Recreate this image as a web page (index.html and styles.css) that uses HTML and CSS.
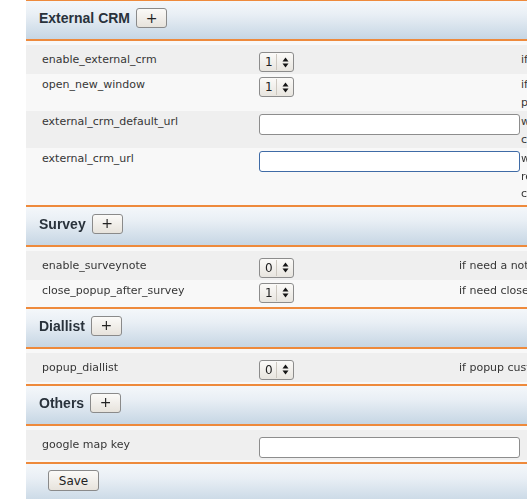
FILE: index.html
```html
<!DOCTYPE html>
<html lang="en">
<head>
<meta charset="utf-8">
<title>Settings</title>
<link rel="stylesheet" href="styles.css">
</head>
<body>
<div class="page">

  <section class="section">
    <div class="section-head">
      <h2 class="section-title">External CRM</h2>
      <button type="button" class="add-btn">+</button>
    </div>
    <div class="section-body">
      <div class="row cols-wide">
        <div class="label">enable_external_crm</div>
        <div class="value">
          <span class="spin"><select class="spin-select"><option>1</option><option>0</option></select><span class="spin-sep"></span><span class="spin-arrows"><svg width="7" height="11" viewBox="0 0 7 11"><polygon points="3.5,0.5 6.5,4.5 0.5,4.5"/><polygon points="0.5,6.5 6.5,6.5 3.5,10.5"/></svg></span></span>
        </div>
        <div class="desc">if enable external crm</div>
      </div>
      <div class="row cols-wide">
        <div class="label">open_new_window</div>
        <div class="value">
          <span class="spin"><select class="spin-select"><option>1</option><option>0</option></select><span class="spin-sep"></span><span class="spin-arrows"><svg width="7" height="11" viewBox="0 0 7 11"><polygon points="3.5,0.5 6.5,4.5 0.5,4.5"/><polygon points="0.5,6.5 6.5,6.5 3.5,10.5"/></svg></span></span>
        </div>
        <div class="desc">if open crm in a new window,<br>popup window otherwise</div>
      </div>
      <div class="row cols-wide">
        <div class="label">external_crm_default_url</div>
        <div class="value"><input type="text" class="field"></div>
        <div class="desc">when caller id not found,<br>crm default url will be used</div>
      </div>
      <div class="row cols-wide">
        <div class="label">external_crm_url</div>
        <div class="value"><input type="text" class="field field-active" autofocus></div>
        <div class="desc">when caller id found,<br>replace %callerid% in url,<br>crm url will be opened</div>
      </div>
    </div>
  </section>

  <section class="section">
    <div class="section-head">
      <h2 class="section-title">Survey</h2>
      <button type="button" class="add-btn">+</button>
    </div>
    <div class="section-body">
      <div class="row cols-narrow">
        <div class="label">enable_surveynote</div>
        <div class="value">
          <span class="spin"><select class="spin-select"><option>0</option><option>1</option></select><span class="spin-sep"></span><span class="spin-arrows"><svg width="7" height="11" viewBox="0 0 7 11"><polygon points="3.5,0.5 6.5,4.5 0.5,4.5"/><polygon points="0.5,6.5 6.5,6.5 3.5,10.5"/></svg></span></span>
        </div>
        <div class="desc">if need a note after survey</div>
      </div>
      <div class="row cols-narrow">
        <div class="label">close_popup_after_survey</div>
        <div class="value">
          <span class="spin"><select class="spin-select"><option>1</option><option>0</option></select><span class="spin-sep"></span><span class="spin-arrows"><svg width="7" height="11" viewBox="0 0 7 11"><polygon points="3.5,0.5 6.5,4.5 0.5,4.5"/><polygon points="0.5,6.5 6.5,6.5 3.5,10.5"/></svg></span></span>
        </div>
        <div class="desc">if need close popup after survey</div>
      </div>
    </div>
  </section>

  <section class="section">
    <div class="section-head">
      <h2 class="section-title">Diallist</h2>
      <button type="button" class="add-btn">+</button>
    </div>
    <div class="section-body">
      <div class="row cols-narrow">
        <div class="label">popup_diallist</div>
        <div class="value">
          <span class="spin"><select class="spin-select"><option>0</option><option>1</option></select><span class="spin-sep"></span><span class="spin-arrows"><svg width="7" height="11" viewBox="0 0 7 11"><polygon points="3.5,0.5 6.5,4.5 0.5,4.5"/><polygon points="0.5,6.5 6.5,6.5 3.5,10.5"/></svg></span></span>
        </div>
        <div class="desc">if popup customer diallist</div>
      </div>
    </div>
  </section>

  <section class="section">
    <div class="section-head">
      <h2 class="section-title">Others</h2>
      <button type="button" class="add-btn">+</button>
    </div>
    <div class="section-body">
      <div class="row cols-others">
        <div class="label">google map key</div>
        <div class="value"><input type="text" class="field"></div>
        <div class="desc"></div>
      </div>
    </div>
  </section>

  <div class="footer">
    <button type="button" class="save-btn">Save</button>
  </div>

</div>
</body>
</html>
```

FILE: styles.css
```css
html, body {
  margin: 0;
  padding: 0;
  background: #ffffff;
  overflow: hidden;
}

.page {
  width: 760px;
  margin-left: 26px;
  border-top: 1px solid #ee8a3c;
  font-family: "DejaVu Sans", "Noto Sans", sans-serif;
  color: #333333;
}

.section {
  border-bottom: 2px solid #ee8a3c;
}

.section-head {
  height: 40px;
  box-sizing: border-box;
  display: flex;
  align-items: center;
  gap: 6px;
  padding: 0 0 4px 13px;
  background: linear-gradient(to bottom, #f4f7fa 0%, #e9eff5 35%, #c6d6e4 100%);
  border-bottom: 2px solid #ee8a3c;
}

.section-title {
  margin: 0;
  font-family: "Liberation Sans", Arial, sans-serif;
  font-weight: 700;
  font-size: 14px;
  color: #29323b;
}

.add-btn {
  width: 31px;
  height: 20px;
  box-sizing: border-box;
  padding: 0 0 1px;
  border: 1px solid #8a8a8a;
  border-radius: 3px;
  background: linear-gradient(to bottom, #fbfaf8, #e7e3dc);
  font-family: "DejaVu Sans", sans-serif;
  font-size: 14px;
  line-height: 16px;
  color: #222222;
}

.section-body {
  background: #f8f8f8;
  padding: 4px 0 2px;
}

.row {
  display: grid;
  padding-top: 1px;
  font-size: 11px;
}

.row:first-child {
  padding-top: 5px;
}

.row:nth-child(odd) {
  background: #efefef;
}

.cols-wide {
  grid-template-columns: 233px 262px 1fr;
}

.cols-narrow {
  grid-template-columns: 233px 200px 1fr;
}

.cols-others {
  grid-template-columns: 233px 270px 1fr;
}

.label {
  padding: 1px 0 0 16px;
  line-height: 17.5px;
  color: #363636;
}

.desc {
  padding-top: 1px;
  line-height: 17.5px;
  white-space: nowrap;
  color: #363636;
}

.value {
  display: flex;
  align-items: flex-start;
}

.spin {
  display: inline-flex;
  align-items: stretch;
  width: 35px;
  height: 20px;
  box-sizing: border-box;
  margin: 2px 0;
  border: 1px solid #8c8c8c;
  border-radius: 3px;
  background: linear-gradient(to bottom, #fbfaf8, #e8e5df);
}

.spin-select {
  -webkit-appearance: none;
  appearance: none;
  width: 16px;
  border: none;
  background: transparent;
  padding: 0 0 0 5px;
  margin: 0;
  font-family: "DejaVu Sans", sans-serif;
  font-size: 12px;
  color: #222222;
  outline: none;
}

.spin-sep {
  width: 1px;
  margin: 1px 0;
  background: #cdc8c0;
}

.spin-arrows {
  flex: 1;
  display: flex;
  align-items: center;
  justify-content: center;
}

.spin-arrows svg {
  fill: #151515;
}

.field {
  width: 261px;
  height: 21px;
  box-sizing: border-box;
  margin: 2px 0;
  padding: 0 3px;
  border: 1px solid #8d8d8d;
  border-radius: 3px;
  background: #ffffff;
  font-family: "DejaVu Sans", sans-serif;
  font-size: 11px;
  outline: none;
  caret-color: #000000;
}

.field-active {
  border-color: #3f6ba6;
}

.footer {
  height: 40px;
  box-sizing: border-box;
  padding: 6px 0 0 22px;
  background: linear-gradient(to bottom, #f4f7fa 0%, #e9eff5 35%, #c6d6e4 100%);
}

.save-btn {
  width: 51px;
  height: 21px;
  box-sizing: border-box;
  padding: 0;
  border: 1px solid #8a8a8a;
  border-radius: 3px;
  background: linear-gradient(to bottom, #fbfaf8, #e7e3dc);
  font-family: "DejaVu Sans", sans-serif;
  font-size: 12px;
  color: #222222;
}
```
